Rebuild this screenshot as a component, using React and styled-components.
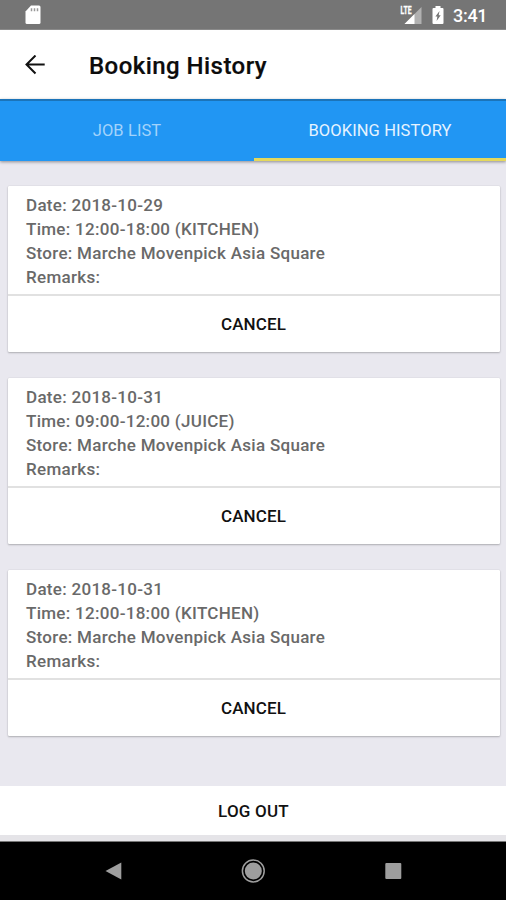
import { useState } from "react";
import styled, { createGlobalStyle } from "styled-components";

const GlobalStyle = createGlobalStyle`
  * {
    box-sizing: border-box;
  }
  body {
    margin: 0;
    font-family: Roboto, "Noto Sans", sans-serif;
  }
  button {
    border: none;
    padding: 0;
    font-family: inherit;
    cursor: pointer;
  }
`;

const Screen = styled.div`
  width: 506px;
  height: 900px;
  display: flex;
  flex-direction: column;
  background-color: #e9e8ef;
  overflow: hidden;
`;

const StatusBar = styled.div`
  height: 30px;
  flex-shrink: 0;
  display: flex;
  align-items: center;
  padding: 0 20px 0 25px;
  background-color: #757575;
  border-bottom: 1px solid #8a8a8a;
`;

const StatusIcons = styled.div`
  margin-left: auto;
  display: flex;
  align-items: center;
`;

const Clock = styled.span`
  margin-left: 9px;
  width: 33px;
  padding-top: 2px;
  font-size: 18px;
  line-height: 20px;
  font-weight: 500;
  letter-spacing: -0.3px;
  white-space: nowrap;
  color: white;
`;

const Header = styled.header`
  height: 69px;
  flex-shrink: 0;
  display: flex;
  align-items: center;
  padding: 0 0 0 25px;
  background-color: white;
`;

const BackButton = styled.button`
  width: 20px;
  height: 20px;
  display: flex;
  background: none;
`;

const Title = styled.h1`
  margin: 2px 0 0 44px;
  font-size: 24px;
  line-height: 30px;
  font-weight: 500;
  letter-spacing: 0.45px;
  -webkit-text-stroke: 0.2px #0c0c0c;
  color: #0c0c0c;
`;

const Tabs = styled.nav`
  height: 62px;
  flex-shrink: 0;
  display: flex;
  background-color: #2196f3;
  border-top: 2px solid #1b74b9;
  box-shadow: 0 1px 3px rgba(0, 0, 0, 0.4);
`;

const Tab = styled.button`
  width: ${(props) => (props.$active ? "252px" : "254px")};
  padding-top: 2px;
  background: none;
  border-bottom: 3px solid ${(props) => (props.$active ? "#e4d85c" : "transparent")};
  font-size: 16.5px;
  letter-spacing: 0.1px;
  color: ${(props) => (props.$active ? "#e6f3ff" : "#a3d3fb")};
`;

const List = styled.main`
  flex: 1;
  display: flex;
  flex-direction: column;
  gap: 26px;
  padding: 25px 6px 0 8px;
`;

const Card = styled.article`
  height: 166px;
  display: flex;
  flex-direction: column;
  background-color: white;
  border-radius: 1px;
  box-shadow: 0 1px 2px rgba(0, 0, 0, 0.24), 0 0 1px rgba(0, 0, 0, 0.2);
`;

const Details = styled.div`
  height: 110px;
  padding: 7px 18px 0;
  border-bottom: 2px solid #e1e1e1;
  font-size: 17px;
  line-height: 24px;
  font-weight: 500;
  letter-spacing: 0.29px;
  color: #696969;
`;

const CancelButton = styled.button`
  flex: 1;
  padding-right: 1px;
  background: none;
  font-size: 17px;
  font-weight: 500;
  letter-spacing: 0.1px;
  color: #111;
`;

const LogoutButton = styled.button`
  height: 49px;
  flex-shrink: 0;
  padding: 1px 0 0 1px;
  background-color: white;
  font-size: 17px;
  font-weight: 500;
  letter-spacing: 0.2px;
  color: #111;
`;

const BottomEdge = styled.div`
  height: 7px;
  flex-shrink: 0;
  background-color: #e5e4e8;
  border-bottom: 1px solid #777;
`;

const NavBar = styled.div`
  height: 58px;
  flex-shrink: 0;
  display: flex;
  justify-content: center;
  align-items: center;
  gap: 116px;
  background-color: black;
`;

const bookings = [
  { id: 1, date: "2018-10-29", time: "12:00-18:00 (KITCHEN)" },
  { id: 2, date: "2018-10-31", time: "09:00-12:00 (JUICE)" },
  { id: 3, date: "2018-10-31", time: "12:00-18:00 (KITCHEN)" },
];

const SdCard = () => (
  <svg width="16" height="20" viewBox="0 0 16 20">
    <path d="M6 .5H14Q15.5.5 15.5 2V17.5Q15.5 19 14 19H2Q.5 19 .5 17.5V6.5Z" fill="#fff" />
    <path d="M6.5 3.2v3M9.5 3.2v3M12.5 3.2v3" stroke="#999" strokeWidth="1.5" />
  </svg>
);

const Signal = () => (
  <svg width="22" height="20" viewBox="0 0 22 20">
    <path d="M21.5 2V19H4.5Z" fill="#b1b1b1" />
    <path d="M14.5 9V19H4.5Z" fill="#fff" />
    <path d="M0 0H11.5V10H0Z" fill="#757575" />
    <text
      x="0.5"
      y="9"
      fontSize="10"
      fontWeight="700"
      textLength="11"
      lengthAdjust="spacingAndGlyphs"
      fill="#fff"
      stroke="#fff"
      strokeWidth="0.3"
    >
      LTE
    </text>
  </svg>
);

const BatteryIcon = styled.svg`
  margin-left: 10px;
`;

const Battery = () => (
  <BatteryIcon width="12" height="20" viewBox="0 0 12 20">
    <path d="M3.5 1H8.5V3H10.5Q11.5 3 11.5 4V18Q11.5 19 10.5 19H1.5Q.5 19 .5 18V4Q.5 3 1.5 3H3.5Z" fill="#fff" />
    <path d="M7.5 6L3.4 11.5H5.4L4.6 16L8.7 10.2H6.7Z" fill="#757575" />
  </BatteryIcon>
);

const BookingCard = ({ booking }) => {
  return (
    <Card>
      <Details>
        <div>Date: {booking.date}</div>
        <div>Time: {booking.time}</div>
        <div>Store: Marche Movenpick Asia Square</div>
        <div>Remarks:</div>
      </Details>
      <CancelButton>CANCEL</CancelButton>
    </Card>
  );
};

const App = () => {
  const [tab, setTab] = useState("history");

  return (
    <>
      <GlobalStyle />
      <Screen>
        <StatusBar>
          <SdCard />
          <StatusIcons>
            <Signal />
            <Battery />
            <Clock>3:41</Clock>
          </StatusIcons>
        </StatusBar>
        <Header>
          <BackButton aria-label="Back">
            <svg width="20" height="20" viewBox="0 0 20 20" fill="none" stroke="#111" strokeWidth="2">
              <path d="M19.7 9.5H2M10.5 0.5L1.5 9.5L10.5 18.5" />
            </svg>
          </BackButton>
          <Title>Booking History</Title>
        </Header>
        <Tabs>
          <Tab $active={tab === "jobs"} onClick={() => setTab("jobs")}>JOB LIST</Tab>
          <Tab $active={tab === "history"} onClick={() => setTab("history")}>BOOKING HISTORY</Tab>
        </Tabs>
        <List>
          {bookings.map((booking) => (
            <BookingCard key={booking.id} booking={booking} />
          ))}
        </List>
        <LogoutButton>LOG OUT</LogoutButton>
        <BottomEdge />
        <NavBar>
          <svg width="24" height="24" viewBox="0 0 24 24">
            <path d="M4.5 12L20.3 3.5V20.5Z" fill="#9e9e9e" />
          </svg>
          <svg width="24" height="24" viewBox="0 0 24 24">
            <circle cx="12.3" cy="12" r="10.9" fill="none" stroke="#9e9e9e" strokeWidth="1.5" />
            <circle cx="12.3" cy="12" r="8.5" fill="#9e9e9e" />
          </svg>
          <svg width="24" height="24" viewBox="0 0 24 24">
            <rect x="4.3" y="4" width="16" height="16" rx="1" fill="#9e9e9e" />
          </svg>
        </NavBar>
      </Screen>
    </>
  );
};

export default App;
